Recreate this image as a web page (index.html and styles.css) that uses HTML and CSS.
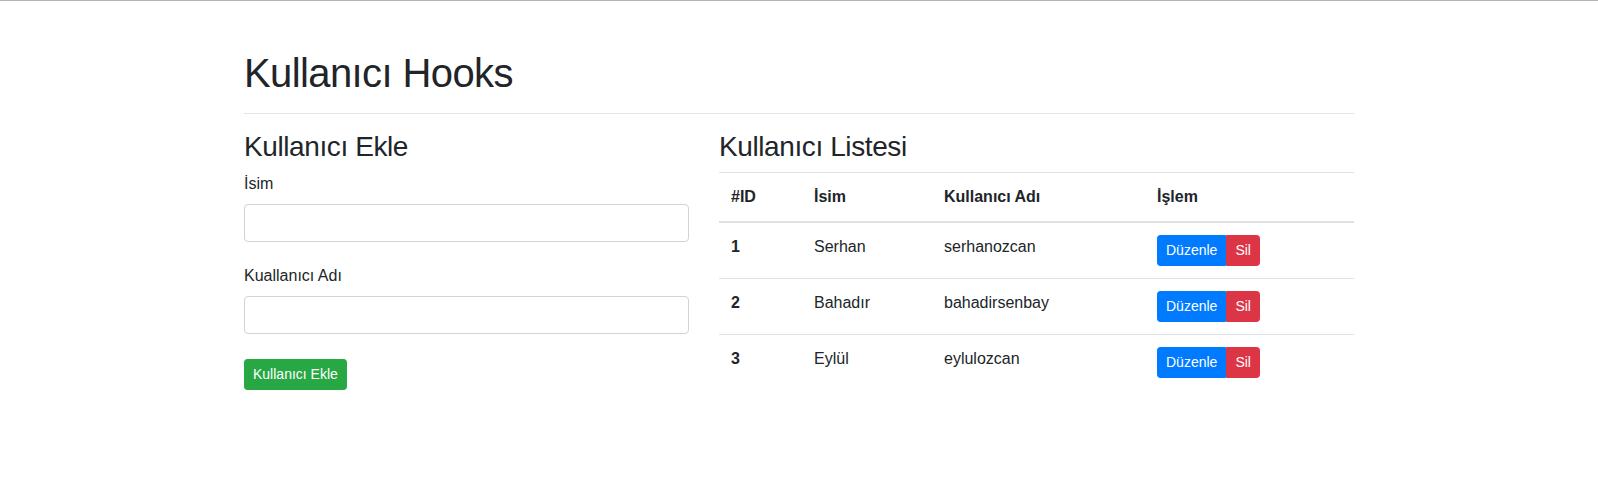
FILE: index.html
```html
<!DOCTYPE html>
<html lang="tr">
<head>
<meta charset="utf-8">
<title>Kullanıcı Hooks</title>
<link rel="stylesheet" href="styles.css">
</head>
<body>
<div class="container">
  <h1 class="title">Kullanıcı Hooks</h1>
  <hr class="divider">
  <div class="row">
    <div class="col-left">
      <h3 class="subtitle">Kullanıcı Ekle</h3>
      <form class="user-form">
        <div class="form-group first">
          <label class="label">İsim</label>
          <input class="input" type="text">
        </div>
        <div class="form-group second">
          <label class="label">Kuallanıcı Adı</label>
          <input class="input" type="text">
        </div>
        <button type="button" class="btn btn-success">Kullanıcı Ekle</button>
      </form>
    </div>
    <div class="col-right">
      <h3 class="subtitle">Kullanıcı Listesi</h3>
      <table class="table">
        <thead>
          <tr>
            <th class="c-id">#ID</th>
            <th class="c-name">İsim</th>
            <th class="c-user">Kullanıcı Adı</th>
            <th class="c-act">İşlem</th>
          </tr>
        </thead>
        <tbody>
          <tr>
            <th>1</th>
            <td>Serhan</td>
            <td>serhanozcan</td>
            <td><div class="btn-group"><button class="btn btn-primary">Düzenle</button><button class="btn btn-danger">Sil</button></div></td>
          </tr>
          <tr>
            <th>2</th>
            <td>Bahadır</td>
            <td>bahadirsenbay</td>
            <td><div class="btn-group"><button class="btn btn-primary">Düzenle</button><button class="btn btn-danger">Sil</button></div></td>
          </tr>
          <tr>
            <th>3</th>
            <td>Eylül</td>
            <td>eylulozcan</td>
            <td><div class="btn-group"><button class="btn btn-primary">Düzenle</button><button class="btn btn-danger">Sil</button></div></td>
          </tr>
        </tbody>
      </table>
    </div>
  </div>
</div>
</body>
</html>
```

FILE: styles.css
```css
* { box-sizing: border-box; }
html, body { margin: 0; padding: 0; }
body {
  font-family: "Liberation Sans", Arial, sans-serif;
  font-size: 16px;
  line-height: 1.5;
  color: #212529;
  background: #fff;
  border-top: 1px solid #b3b3b3;
}
.container {
  width: 1140px;
  margin: 48px auto 0;
  padding: 0 15px;
}
.title {
  font-size: 40px;
  font-weight: 500;
  line-height: 1.2;
  letter-spacing: -0.6px;
  margin: 0 0 8px;
}
.divider {
  margin: 16px 0;
  border: 0;
  border-top: 1px solid rgba(0, 0, 0, 0.1);
  height: 0;
}
.row {
  display: flex;
  margin: 0 -15px;
}
.col-left {
  width: 475px;
  padding: 0 15px;
}
.col-right {
  width: 665px;
  padding: 0 15px;
}
.subtitle {
  font-size: 28px;
  font-weight: 500;
  line-height: 1.2;
  letter-spacing: -0.4px;
  margin: 0 0 8px;
}
.form-group { display: flex; flex-direction: column; }
.form-group.first { margin-bottom: 22.5px; }
.form-group.second { margin-bottom: 25px; }
.label {
  display: block;
  margin-bottom: 8px;
}
.input {
  display: block;
  width: 100%;
  height: 38px;
  padding: 6px 12px;
  font: inherit;
  border: 1px solid #ced4da;
  border-radius: 4px;
  background: #fff;
}
.btn {
  display: inline-block;
  font-family: inherit;
  font-size: 14px;
  line-height: 1.5;
  font-weight: 400;
  padding: 4px 8px;
  border: 1px solid transparent;
  border-radius: 3.2px;
  color: #fff;
  cursor: pointer;
}
.btn-success { background: #28a745; border-color: #28a745; }
.btn-primary { background: #007bff; border-color: #007bff; }
.btn-danger { background: #dc3545; border-color: #dc3545; }
.btn-group { display: inline-flex; }
.btn-group .btn-primary { border-top-right-radius: 0; border-bottom-right-radius: 0; }
.btn-group .btn-danger { border-top-left-radius: 0; border-bottom-left-radius: 0; }
.table {
  width: 100%;
  border-collapse: collapse;
  color: #212529;
}
.table th, .table td {
  padding: 12px;
  text-align: left;
  vertical-align: top;
  border-top: 1px solid #dee2e6;
}
.table th { font-weight: 700; }
.table thead th {
  vertical-align: bottom;
  border-bottom: 2px solid #dee2e6;
}
.c-id { width: 83px; }
.c-name { width: 130px; }
.c-user { width: 213px; }
.c-act { width: 209px; }
```
